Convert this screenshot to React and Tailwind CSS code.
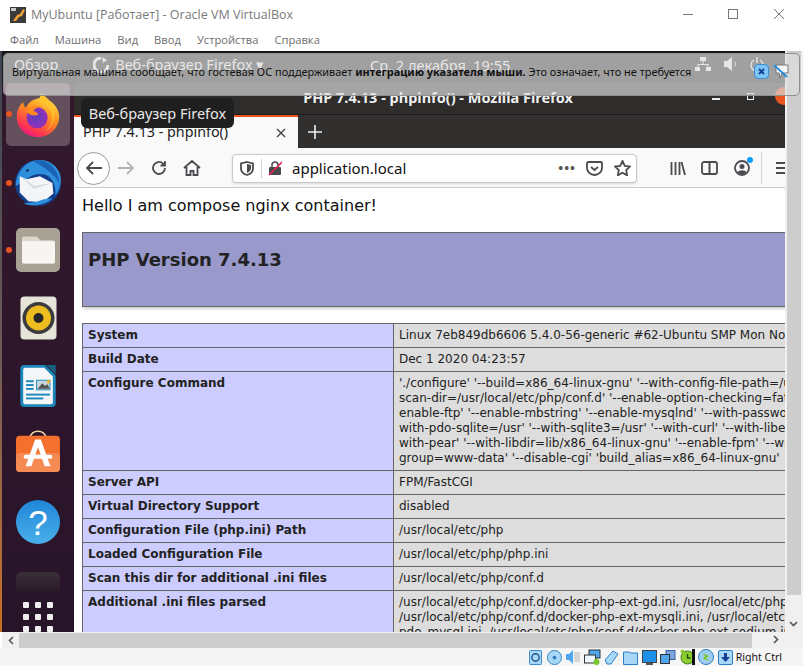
import { useId } from 'react'

const menuItems = ['Файл', 'Машина', 'Вид', 'Ввод', 'Устройства', 'Справка']

const phpRows = [
  { name: 'System', lines: ['Linux 7eb849db6606 5.4.0-56-generic #62-Ubuntu SMP Mon Nov 23 19:20:19 UTC 2020 x86_64'] },
  { name: 'Build Date', lines: ['Dec 1 2020 04:23:57'] },
  {
    name: 'Configure Command',
    lines: [
      "'./configure' '--build=x86_64-linux-gnu' '--with-config-file-path=/usr/local/etc/php' '--with-config-file-",
      "scan-dir=/usr/local/etc/php/conf.d' '--enable-option-checking=fatal' '--with-mhash' '--",
      "enable-ftp' '--enable-mbstring' '--enable-mysqlnd' '--with-password-argon2' '--with-sodium=shared' '--",
      "with-pdo-sqlite=/usr' '--with-sqlite3=/usr' '--with-curl' '--with-libedit' '--with-openssl' '--with-zlib' '--",
      "with-pear' '--with-libdir=lib/x86_64-linux-gnu' '--enable-fpm' '--with-fpm-user=www-data' '--with-fpm-",
      "group=www-data' '--disable-cgi' 'build_alias=x86_64-linux-gnu'",
    ],
  },
  { name: 'Server API', lines: ['FPM/FastCGI'] },
  { name: 'Virtual Directory Support', lines: ['disabled'] },
  { name: 'Configuration File (php.ini) Path', lines: ['/usr/local/etc/php'] },
  { name: 'Loaded Configuration File', lines: ['/usr/local/etc/php/php.ini'] },
  { name: 'Scan this dir for additional .ini files', lines: ['/usr/local/etc/php/conf.d'] },
  {
    name: 'Additional .ini files parsed',
    lines: [
      '/usr/local/etc/php/conf.d/docker-php-ext-gd.ini, /usr/local/etc/php/conf.d/docker-php-ext-',
      '/usr/local/etc/php/conf.d/docker-php-ext-mysqli.ini, /usr/local/etc/php/conf.d/docker-php-ext-',
      'pdo_mysql.ini, /usr/local/etc/php/conf.d/docker-php-ext-sodium.ini',
    ],
  },
]

function FirefoxLogo({ size = 50 }) {
  const id = useId()
  return (
    <svg width={size} height={size} viewBox="0 0 50 50">
      <defs>
        <linearGradient id={id + 'a'} x1="0.75" y1="0.05" x2="0.25" y2="1">
          <stop offset="0" stopColor="#ffe747" />
          <stop offset="0.45" stopColor="#ff8a1f" />
          <stop offset="0.8" stopColor="#ff3750" />
          <stop offset="1" stopColor="#e31587" />
        </linearGradient>
        <radialGradient id={id + 'b'} cx="0.45" cy="0.45" r="0.6">
          <stop offset="0" stopColor="#5a3fc0" />
          <stop offset="1" stopColor="#9b2fb5" />
        </radialGradient>
      </defs>
      <path d="M25 49C11 49 2 39 2 27 2 20 5 14 9 11c0 3 1 5 3 6 2-5 7-9 13-10 5-1 4-6 4-6s2 3 3 6c8 2 16 10 16 20 0 12-10 22-23 22z" fill={`url(#${id}a)`} />
      <path d="M28 2c9 5 13 11 13 17 4 8 0 20-8 23 8-5 10-15 6-22-3-6-8-9-13-10z" fill="#ffc42e" />
      <circle cx="24" cy="28" r="11.5" fill={`url(#${id}b)`} />
      <path d="M13 22c3-6 10-9 17-6-5 0-9 2-10 5 3 0 5 2 5 4-4 1-8 1-12-3z" fill="#ff8a1f" />
    </svg>
  )
}

function ThunderbirdLogo() {
  return (
    <svg width="48" height="48" viewBox="0 0 50 50">
      <circle cx="25" cy="25" r="24" fill="#123f8c" />
      <path d="M2 28C2 13 13 1 27 1c10 0 18 6 21 15 2 8 0 16-5 22 1-9-2-17-9-21-7-3-15-1-21 4-4 2-7 5-11 7z" fill="#2d8fdc" />
      <path d="M20 2c8-2 16 1 21 7 4 5 6 10 6 16-5-9-13-15-27-23z" fill="#1b62b5" />
      <path d="M6 18l7 3 14-3 13 7 1 11-11 9-15-1-9-9z" fill="#f4f5f8" />
      <path d="M6 18l15 10 19-3-19 6z" fill="#d4d7df" />
      <path d="M10 46c8 4 22 3 30-5l-9 1-9 3z" fill="#2d8fdc" />
      <circle cx="14" cy="12" r="1.400" fill="#0b2350" />
    </svg>
  )
}

function FilesIcon() {
  return (
    <div className="w-[44px] h-[44px] rounded-[5px] bg-[#a7a294] flex items-center justify-center">
      <svg width="33" height="28" viewBox="0 0 34 28">
        <path d="M2 0h13l4 4h13a2 2 0 0 1 2 2v20a2 2 0 0 1-2 2H2a2 2 0 0 1-2-2V2a2 2 0 0 1 2-2z" fill="#d9d6cb" />
        <path d="M2 5h30a2 2 0 0 1 2 2v19a2 2 0 0 1-2 2H2a2 2 0 0 1-2-2V5z" fill="#f6f5f2" />
      </svg>
    </div>
  )
}

function RhythmboxIcon() {
  return (
    <svg width="37" height="44" viewBox="0 0 37 44">
      <rect x="0.500" y="0.500" width="36" height="43" rx="4" fill="#e6e3d9" />
      <circle cx="18.500" cy="22" r="16" fill="#3b3b3e" />
      <circle cx="18.500" cy="22" r="12.500" fill="#edbd1f" />
      <circle cx="18.500" cy="22" r="5" fill="#27272a" />
    </svg>
  )
}

function WriterIcon() {
  return (
    <svg width="37" height="44" viewBox="0 0 38 46">
      <path d="M4 1h22l11 11v29a4 4 0 0 1-4 4H4a4 4 0 0 1-4-4V5a4 4 0 0 1 4-4z" fill="#1b87ba" />
      <path d="M5 4h20l9 9v27a2 2 0 0 1-2 2H5a2 2 0 0 1-2-2V6a2 2 0 0 1 2-2z" fill="#f4f6f8" />
      <path d="M27 1l10 0 0 10z" fill="#17607f" />
      <rect x="6" y="17" width="8" height="2" fill="#1b87ba" />
      <rect x="6" y="21" width="8" height="2" fill="#1b87ba" />
      <rect x="6" y="25" width="8" height="2" fill="#1b87ba" />
      <rect x="17" y="17" width="14" height="10" fill="#c9d6dd" stroke="#1b87ba" />
      <path d="M18 26l5-6 3 3 2-2 3 5z" fill="#555" />
      <rect x="28" y="17" width="3" height="3" fill="#f5b81c" />
      <rect x="6" y="31" width="25" height="2" fill="#1b87ba" />
      <rect x="6" y="35" width="18" height="2" fill="#1b87ba" />
    </svg>
  )
}

function StoreIcon() {
  return (
    <svg width="44" height="43" viewBox="0 0 46 45">
      <path d="M15 8c0-9 16-9 16 0" fill="none" stroke="#f7d9a8" strokeWidth="1.600" />
      <rect x="0" y="6" width="46" height="38" rx="4" fill="#f4702c" />
      <rect x="0" y="24" width="46" height="20" rx="4" fill="#f58a52" />
      <path d="M20 10h6l10 28h-6l-7-20-7 20h-6z" fill="#fff" />
      <rect x="8" y="26" width="30" height="4" rx="2" fill="#fff" />
    </svg>
  )
}

function HelpIcon() {
  return (
    <div className="w-[44px] h-[44px] rounded-full bg-gradient-to-b from-[#1f86d8] to-[#4ab0ea] flex items-center justify-center">
      <span className="font-['Liberation_Sans',sans-serif] text-[35px] leading-none text-white">?</span>
    </div>
  )
}

function Dock() {
  const running = 'absolute left-[4px] w-[6px] h-[6px] rounded-full bg-[#e95420]'
  return (
    <div className="w-[72px] shrink-0 flex flex-col items-center bg-gradient-to-b from-[#33182d] to-[#281429] overflow-hidden relative">
      <div className="h-[63px] w-[64px] shrink-0 rounded-[5px] bg-[#64505c] flex items-center justify-center">
        <FirefoxLogo size={46} />
      </div>
      <div className="h-[74px] shrink-0 flex items-center justify-center"><ThunderbirdLogo /></div>
      <div className="h-[60px] shrink-0 flex items-center justify-center"><FilesIcon /></div>
      <div className="h-[76px] shrink-0 flex items-center justify-center"><RhythmboxIcon /></div>
      <div className="h-[60px] shrink-0 flex items-center justify-center"><WriterIcon /></div>
      <div className="h-[70px] shrink-0 flex items-center justify-center"><StoreIcon /></div>
      <div className="h-[72px] shrink-0 flex items-center justify-center"><HelpIcon /></div>
      <div className="h-[20px] w-[44px] shrink-0 mt-[14px] rounded-t-[5px] bg-gradient-to-b from-[#3b3038] to-[#2a1a2a]" />
      <div className="absolute left-[21px] top-[519px] grid grid-cols-3 gap-x-[6px] gap-y-[6px]">
        {Array.from({ length: 9 }).map((_, i) => (
          <div key={i} className="w-[6px] h-[6px] rounded-[1px] bg-[#eeeeee]" />
        ))}
      </div>
      <span className={running + ' top-[28px]'} />
      <span className={running + ' top-[97px]'} />
      <span className={running + ' top-[164px]'} />
    </div>
  )
}

function NavBar() {
  const stroke = { fill: 'none', stroke: '#4a4a4f', strokeWidth: 1.8 }
  return (
    <div className="h-[40px] shrink-0 pt-[1px] bg-[#f9f9fa] border-b border-[#cccccc] flex items-center relative">
      <div className="ml-[3px] w-[33px] h-[33px] shrink-0 rounded-full border border-[#9a9a9a] bg-white flex items-center justify-center">
        <svg width="18" height="16" viewBox="0 0 18 16"><path d="M17 8H2M8 2L2 8l6 6" {...stroke} /></svg>
      </div>
      <svg className="ml-[7px] shrink-0" width="18" height="16" viewBox="0 0 18 16"><path d="M1 8h15M10 2l6 6-6 6" fill="none" stroke="#b5b5b8" strokeWidth="1.800" /></svg>
      <svg className="ml-[16px] shrink-0" width="16" height="16" viewBox="0 0 16 16"><path d="M14 8a6 6 0 1 1-2-4.500L14 5M14 1v4.500H9.500" {...stroke} /></svg>
      <svg className="ml-[16px] shrink-0" width="18" height="16" viewBox="0 0 18 16"><path d="M1 8l8-7 8 7M3.500 7v8h4v-4h3v4h4V7" {...stroke} /></svg>
      <div className="ml-[31px] w-[405px] h-[29px] shrink-0 rounded-[4px] border border-[#c8c8c8] bg-white flex items-center shadow-sm">
        <svg className="ml-[7px]" width="14" height="15" viewBox="0 0 14 15"><path d="M7 1l6 1.500v5c0 3-2.500 5.500-6 6.500-3.500-1-6-3.500-6-6.500v-5z" {...stroke} /><path d="M7 3v9c2-1 4-2.500 4-5V4z" fill="#4a4a4f" /></svg>
        <div className="ml-[7px] w-px h-[19px] bg-[#cfcfcf]" />
        <svg className="ml-[6px]" width="14" height="15" viewBox="0 0 14 15"><rect x="1" y="6" width="12" height="8" rx="1" fill="#4a4a4f" /><path d="M4 6V4a3 3 0 0 1 6 0v2" fill="none" stroke="#4a4a4f" strokeWidth="1.500" /><path d="M1 14L14 1" stroke="#e22850" strokeWidth="1.600" /></svg>
        <span className="ml-[10px] font-['Noto_Sans',sans-serif] text-[15px] text-[#111111] leading-none">application.local</span>
        <span className="ml-auto text-[#555555] text-[13px] font-bold tracking-[1px] leading-none">•••</span>
        <svg className="ml-[10px]" width="17" height="15" viewBox="0 0 17 15"><path d="M2.500 1h12A1.500 1.500 0 0 1 16 2.500V7a7.500 7 0 0 1-15 0V2.500A1.500 1.500 0 0 1 2.500 1z" {...stroke} /><path d="M5 6l3.500 3L12 6" {...stroke} /></svg>
        <svg className="ml-[11px] mr-[5px]" width="17" height="16" viewBox="0 0 17 16"><path d="M8.500 1l2.300 4.800 5.200.7-3.800 3.600.9 5.200-4.600-2.500-4.600 2.500.9-5.200L1 6.500l5.200-.7z" {...stroke} /></svg>
      </div>
      <svg className="ml-[33px] shrink-0" width="16" height="15" viewBox="0 0 16 15"><path d="M1.500 1v13M5.500 1v13M9.500 1v13M11.500 1l3.500 13" {...stroke} /></svg>
      <svg className="ml-[15px] shrink-0" width="17" height="14" viewBox="0 0 17 14"><rect x="1" y="1" width="15" height="12" rx="2" {...stroke} /><path d="M8.500 1v12" stroke="#4a4a4f" strokeWidth="2" /></svg>
      <div className="ml-[16px] relative shrink-0">
        <svg width="16" height="16" viewBox="0 0 16 16"><circle cx="8" cy="8" r="7" {...stroke} /><circle cx="8" cy="6.500" r="2.500" fill="#4a4a4f" /><path d="M3.500 12.500c1-3 8-3 9 0L8 15z" fill="#4a4a4f" /></svg>
        <span className="absolute -top-[3px] -right-[3px] w-[6px] h-[6px] rounded-full bg-[#0a9dff]" />
      </div>
      <div className="ml-[11px] w-px h-[32px] shrink-0 bg-[#d4d4d4]" />
      <div className="ml-[14px] flex flex-col gap-[3px] w-[16px] shrink-0">
        <div className="h-[2px] bg-[#4a4a4f]" />
        <div className="h-[2px] bg-[#4a4a4f]" />
        <div className="h-[2px] bg-[#4a4a4f]" />
      </div>
    </div>
  )
}

function PhpPage() {
  return (
    <div className="flex-1 bg-white overflow-hidden pl-[8px] font-['DejaVu_Sans',sans-serif] text-[#222222]">
      <p className="mt-[8px] h-[20px] text-[16px] leading-[20px] text-[#111111] whitespace-nowrap">Hello I am compose nginx container!</p>
      <div className="mt-[16px] w-[934px] h-[75px] bg-[#9999cc] border border-[#666666] shadow-[1px_2px_3px_#cccccc] px-[5px] pt-[15px]">
        <h1 className="text-[18px] font-bold leading-[24px]">PHP Version 7.4.13</h1>
      </div>
      <table className="mt-[16px] w-[934px] table-fixed border-collapse text-[12px] leading-[15px]">
        <colgroup>
          <col className="w-[311px]" />
          <col />
        </colgroup>
        <tbody>
          {phpRows.map((row) => (
            <tr key={row.name}>
              <td className="border border-[#666666] bg-[#ccccff] font-bold align-top px-[5px] py-[4px] whitespace-nowrap">{row.name}</td>
              <td className="border border-[#666666] bg-[#dddddd] align-top px-[5px] py-[4px]">
                {row.lines.map((line) => (
                  <div key={line} className="whitespace-nowrap">{line}</div>
                ))}
              </td>
            </tr>
          ))}
        </tbody>
      </table>
    </div>
  )
}

function FirefoxWindow() {
  return (
    <div className="flex-1 min-w-0 flex flex-col overflow-hidden">
      <div className="h-[32px] shrink-0 bg-[#2f2c2c] border-b border-[#1d1b1b] relative flex items-center justify-center">
        <span className="font-['Noto_Sans',sans-serif] font-bold text-[14.500px] text-[#f0f0f0] leading-none ml-[17px] -mt-[2px]">PHP 7.4.13 - phpinfo() - Mozilla Firefox</span>
        <div className="absolute left-[638px] top-[15px] w-[8px] h-[2px] bg-[#eeeeee]" />
        <div className="absolute left-[673px] top-[10px] w-[7px] h-[7px] border border-[#eeeeee]" />
        <div className="absolute left-[701px] top-[4px] w-[18px] h-[18px] rounded-full bg-[#e95420]" />
      </div>
      <div className="h-[33px] shrink-0 bg-[#322f2f] flex items-stretch">
        <div className="w-[224px] bg-[#f9f9fa] border-t-2 border-[#e95420] flex items-center pl-[9px] relative">
          <span className="font-['Noto_Sans',sans-serif] text-[14.300px] text-[#222222] leading-none whitespace-nowrap">PHP 7.4.13 - phpinfo()</span>
          <svg className="absolute left-[202px] top-[11px]" width="10" height="10" viewBox="0 0 10 10"><path d="M1 1l8 8M9 1l-8 8" stroke="#444444" strokeWidth="1.400" /></svg>
        </div>
        <svg className="ml-[10px] self-center" width="14" height="14" viewBox="0 0 14 14"><path d="M7 0v14M0 7h14" stroke="#eeeeee" strokeWidth="1.600" /></svg>
      </div>
      <NavBar />
      <PhpPage />
    </div>
  )
}

function GnomeBar() {
  return (
    <div className="h-[31px] shrink-0 bg-[#1c1c1c] flex items-center text-[#f5f5f5] font-['Noto_Sans',sans-serif] text-[14.500px] leading-none relative">
      <span className="ml-[12px] -mt-[6px]">Обзор</span>
      <svg className="ml-[35px] -mt-[6px]" width="16" height="16" viewBox="0 0 16 16"><path d="M8 1a7 7 0 1 0 7 7" fill="none" stroke="#f5f5f5" strokeWidth="3" /><path d="M9 0l5 3-4 3z" fill="#f5f5f5" /></svg>
      <span className="ml-[6px] -mt-[6px]">Веб-браузер Firefox ▾</span>
      <span className="absolute left-[368px] top-[6px]">Ср. 2 декабря&nbsp; 19:55</span>
      <svg className="absolute left-[693px] top-[5px]" width="16" height="14" viewBox="0 0 16 14" fill="#f5f5f5"><rect x="5" y="0" width="6" height="4" /><rect x="0" y="10" width="5" height="4" /><rect x="11" y="10" width="5" height="4" /><path d="M7.500 4h1v3h5v3h-1V8h-9v2h-1V7h5z" /></svg>
      <svg className="absolute left-[722px] top-[5px]" width="16" height="14" viewBox="0 0 16 14" fill="#f5f5f5"><path d="M0 4h3l5-4v14l-5-4H0z" /><path d="M10 4c2 2 2 4 0 6" fill="none" stroke="#f5f5f5" /></svg>
      <svg className="absolute left-[748px] top-[5px]" width="14" height="14" viewBox="0 0 14 14"><path d="M4 3a6 6 0 1 0 6 0M7 0v6" fill="none" stroke="#f5f5f5" strokeWidth="1.400" /></svg>
    </div>
  )
}

function Notice() {
  return (
    <div className="absolute left-[3px] top-[2px] w-[797px] h-[43px] rounded-[5px] border border-[#8f8f8f] bg-[rgba(222,222,222,0.68)] flex items-start">
      <p className="ml-[8px] mt-[10px] font-['Noto_Sans',sans-serif] text-[10.950px] leading-[16px] text-[#111111] whitespace-nowrap">
        Виртуальная машина сообщает, что гостевая ОС поддерживает <b>интеграцию указателя мыши.</b> Это означает, что не требуется
      </p>
      <div className="absolute left-[750px] top-[10px] w-[15px] h-[15px] rounded-[4px] bg-[#7cc4f5] border border-[#3c8fd0] flex items-center justify-center">
        <svg width="7" height="7" viewBox="0 0 7 7"><path d="M1 1l5 5M6 1L1 6" stroke="#123e96" strokeWidth="1.800" /></svg>
      </div>
      <svg className="absolute left-[769px] top-[10px]" width="16" height="16" viewBox="0 0 16 16"><path d="M3 1h12v8h-6l-2 5-1-5H3z" fill="#f5f5f5" stroke="#777777" /><path d="M1 1l13 12" stroke="#1e90e0" strokeWidth="1.800" /></svg>
      <svg className="absolute left-[785px] top-[5px]" width="10" height="7" viewBox="0 0 10 7"><path d="M1 6l4-4 4 4" fill="none" stroke="#d8d8d8" strokeWidth="1.600" /></svg>
    </div>
  )
}

function Tooltip() {
  return (
    <div className="absolute left-[81px] top-[47px] h-[30px] w-[153px] rounded-[6px] bg-[#201f1f] flex items-center justify-center font-['Noto_Sans',sans-serif] text-[14.500px] leading-none text-[#e8e8e8] whitespace-nowrap">
      Веб-браузер Firefox
    </div>
  )
}

function StatusIcon({ children }) {
  return <div className="w-[19px] h-[16px] shrink-0 flex items-center justify-center">{children}</div>
}

function StatusIcons() {
  const blue = '#4fa6ee'
  return (
    <div className="flex items-center">
      <StatusIcon><svg width="13" height="15" viewBox="0 0 14 16"><rect x="0.500" y="0.500" width="13" height="15" rx="1" fill="#a9d7f7" stroke="#2d7fc4" /><circle cx="7" cy="8" r="4" fill="none" stroke="#14508f" strokeWidth="1.500" /></svg></StatusIcon>
      <StatusIcon><svg width="15" height="15" viewBox="0 0 16 16"><circle cx="8" cy="8" r="7.500" fill="#a9d7f7" stroke="#2d7fc4" /><circle cx="8" cy="8" r="2" fill="#2d7fc4" /></svg></StatusIcon>
      <StatusIcon><svg width="15" height="16" viewBox="0 0 15 16"><path d="M0 5h3l4-4v14l-4-4H0z" fill={blue} /><rect x="8" y="3" width="6" height="10" fill="#d5d5d5" /></svg></StatusIcon>
      <StatusIcon><svg width="17" height="16" viewBox="0 0 17 16"><rect x="5" y="1" width="11" height="8" fill={blue} stroke="#333" /><rect x="0.500" y="6" width="11" height="8" fill="#eaf5fd" stroke="#333" /><circle cx="12.500" cy="13" r="3" fill="#7cc62c" /></svg></StatusIcon>
      <StatusIcon><svg width="15" height="16" viewBox="0 0 15 16"><path d="M1 11l8-9 5 3-7 10H3z" fill="#a9d7f7" stroke="#2d7fc4" /></svg></StatusIcon>
      <StatusIcon><svg width="15" height="15" viewBox="0 0 15 15"><path d="M0.500 2h6l1 1h7v11.500h-14z" fill="#a9d7f7" stroke="#2d7fc4" /></svg></StatusIcon>
      <StatusIcon><svg width="15" height="15" viewBox="0 0 15 15"><rect x="0.500" y="0.500" width="14" height="12" fill="#1e90e8" stroke="#444" /><rect x="4" y="13" width="7" height="2" fill="#555" /></svg></StatusIcon>
      <StatusIcon><svg width="16" height="15" viewBox="0 0 16 15"><rect x="6" y="0.500" width="9" height="9" fill="#7aa5dd" stroke="#3b5fa5" /><rect x="0.500" y="4.500" width="9" height="9" fill={blue} stroke="#333" /></svg></StatusIcon>
      <StatusIcon>
        <svg width="15" height="16" viewBox="0 0 15 16"><circle cx="7.500" cy="8.500" r="6.500" fill="#8ccf2e" stroke="#3c7a12" /><path d="M7.500 5v4h3" fill="none" stroke="#234d08" strokeWidth="1.400" /><circle cx="2.500" cy="2.500" r="2" fill="#8ccf2e" /><rect x="12" y="0" width="3" height="16" fill="#111111" /></svg>
      </StatusIcon>
      <StatusIcon><svg width="16" height="16" viewBox="0 0 16 16"><circle cx="8" cy="8" r="7.500" fill="#9dcdf2" stroke="#2d7fc4" /><path d="M4 4l7 3-3 2 4 3-7-2 2-3z" fill="#7cc62c" /></svg></StatusIcon>
      <StatusIcon>
        <div className="w-[15px] h-[15px] rounded-[2px] bg-[#a9d7f7] border border-[#2d7fc4] flex items-center justify-center">
          <svg width="9" height="9" viewBox="0 0 9 9"><path d="M3 0h3v4h3L4.500 9 0 4h3z" fill="#123e96" /></svg>
        </div>
      </StatusIcon>
    </div>
  )
}

export default function App() {
  return (
    <div className="relative w-[803px] h-[666px] overflow-hidden bg-white flex flex-col font-['Open_Sans',sans-serif]">
      <div className="h-[30px] shrink-0 flex items-center pl-[10px] relative">
        <svg width="16" height="16" viewBox="0 0 16 16"><rect width="16" height="16" fill="#3a3a3a" /><path d="M3 14l4-6 3-1 3-5 2 1-3 6-3 1-3 4z" fill="#f0a030" /><rect x="1" y="1" width="5" height="3" fill="#c8c8c8" /></svg>
        <span className="ml-[5px] text-[12.500px] leading-none text-[#7a7a7a] whitespace-nowrap">MyUbuntu [Работает] - Oracle VM VirtualBox</span>
        <div className="absolute left-[683px] top-[14px] w-[10px] h-px bg-[#777777]" />
        <div className="absolute left-[728px] top-[9px] w-[10px] h-[10px] border border-[#777777]" />
        <svg className="absolute left-[774px] top-[9px]" width="10" height="10" viewBox="0 0 10 10"><path d="M0 0l10 10M10 0L0 10" stroke="#777777" /></svg>
      </div>
      <div className="h-[21px] shrink-0 flex items-center gap-[16px] pl-[10px] pb-[1px] text-[11.200px] leading-none text-[#6e6e6e]">
        {menuItems.map((item) => (
          <span key={item}>{item}</span>
        ))}
      </div>

      <div className="flex-1 min-h-0 flex relative">
        <div className="w-[2px] shrink-0 bg-gradient-to-b from-[#3d4450] via-[#6a5a58] to-[#c8701f]" />
        <div className="flex-1 min-w-0 flex flex-col border-t border-[#111111]">
          <GnomeBar />
          <div className="flex-1 min-h-0 flex">
            <Dock />
            <FirefoxWindow />
          </div>
        </div>
        <div className="w-[18px] shrink-0 bg-[#f0f0f0] px-[2px] flex flex-col relative">
          <div className="h-[544px] bg-[#cdcdcd]" />
          <svg className="absolute left-[4px] bottom-[5px]" width="9" height="6" viewBox="0 0 9 6"><path d="M1 1l3.500 3.500L8 1" fill="none" stroke="#555555" strokeWidth="1.600" /></svg>
        </div>
        <Notice />
        <Tooltip />
      </div>

      <div className="h-[16px] shrink-0 ml-[2px] bg-[#f0f0f0] flex items-center relative">
        <svg className="ml-[6px]" width="6" height="9" viewBox="0 0 6 9"><path d="M5 1L1.500 4.500 5 8" fill="none" stroke="#555555" strokeWidth="1.600" /></svg>
        <div className="ml-[5px] w-[733px] h-[15px] bg-[#cdcdcd]" />
        <svg className="absolute left-[771px] top-[3px]" width="6" height="9" viewBox="0 0 6 9"><path d="M1 1l3.500 3.500L1 8" fill="none" stroke="#555555" strokeWidth="1.600" /></svg>
      </div>
      <div className="h-[18px] shrink-0 flex items-center justify-end pr-[21px] gap-[1px] bg-[#f5f5f5]">
        <StatusIcons />
        <span className="text-[10.500px] leading-none text-[#111111] whitespace-nowrap font-['Noto_Sans',sans-serif]">Right Ctrl</span>
      </div>
    </div>
  )
}
